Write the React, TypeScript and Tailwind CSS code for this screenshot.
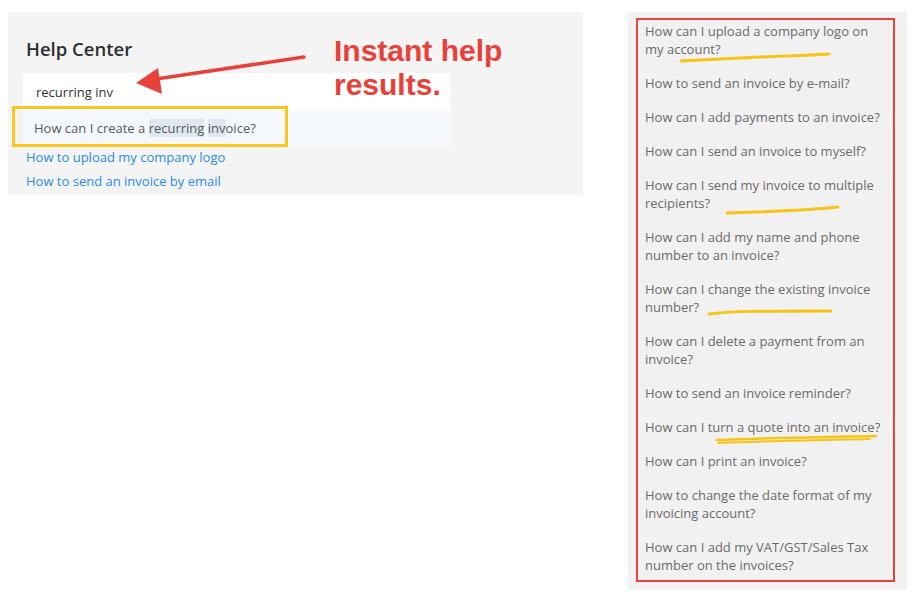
const faqs: string[][] = [
  ['How can I upload a company logo on', 'my account?'],
  ['How to send an invoice by e-mail?'],
  ['How can I add payments to an invoice?'],
  ['How can I send an invoice to myself?'],
  ['How can I send my invoice to multiple', 'recipients?'],
  ['How can I add my name and phone', 'number to an invoice?'],
  ['How can I change the existing invoice', 'number?'],
  ['How can I delete a payment from an', 'invoice?'],
  ['How to send an invoice reminder?'],
  ['How can I turn a quote into an invoice?'],
  ['How can I print an invoice?'],
  ['How to change the date format of my', 'invoicing account?'],
  ['How can I add my VAT/GST/Sales Tax', 'number on the invoices?'],
];

const sans = { fontFamily: '"Open Sans", "Noto Sans", sans-serif' };

function HelpCenter() {
  return (
    <div className="relative mt-[12px] ml-[8px] h-[183px] w-[575px] bg-[#f4f4f4] pl-[15px] pt-[25px]" style={sans}>
      <h2 className="ml-[3px] text-[18.5px] leading-[24px] font-semibold text-[#2c2f33]">Help Center</h2>
      <div className="mt-[12px] w-[427px] bg-white">
        <div className="h-[38px] pl-[13px] pt-[10px] text-[13px] leading-[18px] text-[#333]">recurring inv</div>
        <div className="h-[36px] bg-[#f5f8fb] pl-[11px] pt-[8px] text-[13px] leading-[18px] text-[#555a60]">
          How can I create a <span className="bg-[#dfe7f0]">recurring</span> <span className="bg-[#dfe7f0]">inv</span>oice?
        </div>
      </div>
      <div className="ml-[3px] mt-[-2px] flex flex-col text-[13px] leading-[24px] text-[#2b8ce3]">
        <a>How to upload my company logo</a>
        <a>How to send an invoice by email</a>
      </div>
      {/* annotation box */}
      <div className="absolute left-[4px] top-[94px] h-[41px] w-[276px] border-[3px] border-[#f9c71e]" />
    </div>
  );
}

function FaqList() {
  return (
    <div className="mt-[12px] ml-[45px] h-[578px] w-[279px] bg-[#f1f1f1] pl-[8px] pt-[6px]" style={sans}>
      <div className="flex h-[564px] w-[259px] flex-col gap-[16px] border-[2px] border-[#e8423a] pl-[7px] pt-[2px] text-[13px] leading-[18px] text-[#6b6b6b]">
        {faqs.map((lines) => (
          <div key={lines[0]}>
            {lines.map((l) => (
              <div key={l} className="whitespace-nowrap">{l}</div>
            ))}
          </div>
        ))}
      </div>
    </div>
  );
}

export default function App() {
  return (
    <div className="relative h-[600px] w-[924px] bg-white">
      <div className="flex">
        <HelpCenter />
        <FaqList />
      </div>

      <div
        className="absolute left-[334px] top-[34px] text-[30px] leading-[34px] font-bold text-[#e8413a]"
        style={{ fontFamily: '"Liberation Sans", Arial, sans-serif' }}
      >
        Instant help
        <br />
        results.
      </div>

      {/* arrow + marker strokes */}
      <svg className="pointer-events-none absolute left-0 top-0" width="924" height="600">
        <line x1="304" y1="57" x2="156" y2="79" stroke="#e8413a" strokeWidth="3.5" strokeLinecap="round" />
        <polygon points="136,83 158,68 162,94" fill="#e8413a" />
        <g fill="none" stroke="#f7c414" strokeLinecap="round">
          <path d="M681 61 C720 59 740 58 760 57 C790 56 810 55 829 54" strokeWidth="3" />
          <path d="M727 213 C760 212 800 211 838 207" strokeWidth="3" />
          <path d="M709 314 C730 311 760 311 831 311" strokeWidth="3" />
          <path d="M717 440 C760 438 830 437 876 436" strokeWidth="2.5" />
          <path d="M718 443 C770 441 830 440 870 439" strokeWidth="2" />
        </g>
      </svg>
    </div>
  );
}
